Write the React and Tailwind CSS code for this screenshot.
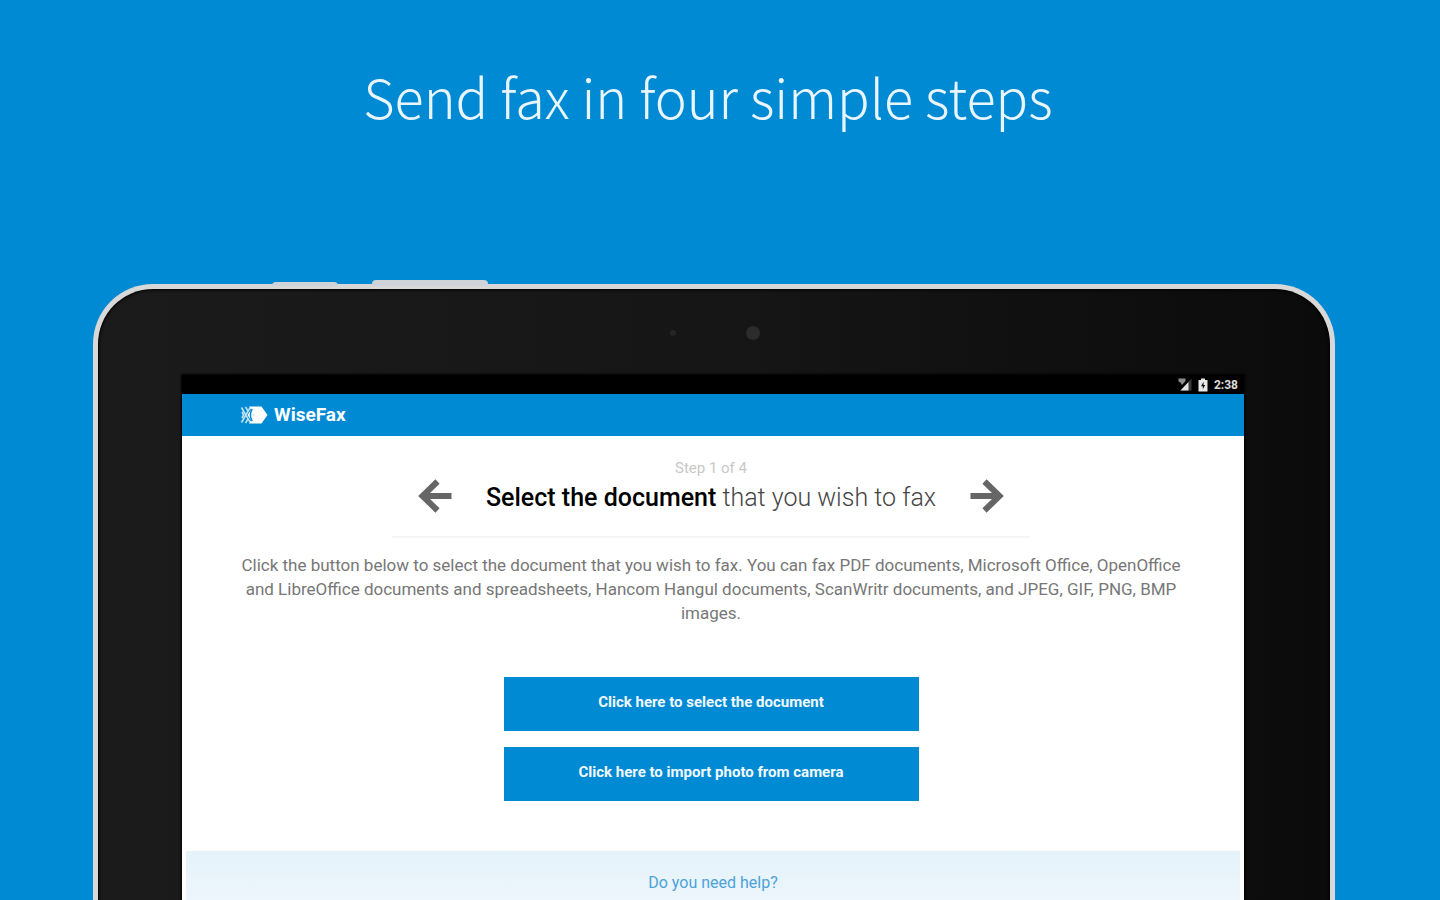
function Logo() {
    return (
        <svg className="h-[18px] w-[28px]" viewBox="0 0 28 18" aria-hidden="true">
            <path d="M9 0.5h12.5L27.5 9l-6 8.5H9L14 9z" fill="#fff" />
            <path d="M10.5 4.5L7.5 9l3 4.5h5L13.5 9l2-4.5z" fill="#fff" />
            <path d="M12.2 2.8Q8.6 9 12.2 15.2" fill="none" stroke="#008ad4" strokeWidth="1.5" />
            <path
                d="M1.5 1.5L10 16.2M1.5 16.5L10 1.8M5.5 0.8L8 5M5.5 17.2L8 13M2 6L3.6 9L2 12"
                fill="none"
                stroke="#fff"
                strokeWidth="1.6"
                strokeOpacity="0.75"
            />
        </svg>
    );
}

function SignalIcon() {
    return (
        <svg className="h-[13px] w-[15px]" viewBox="0 0 15 13" aria-hidden="true">
            <path d="M14.5 0.5v12H3z" fill="#3a3a3a" />
            <path d="M11.5 4v8.5H3.5z" fill="#e4e4e4" />
            <path d="M1.5 0.5h7v2.5l-3.5 4-1.5-2.5L1.5 3.5z" fill="#8d8d8d" />
        </svg>
    );
}

function BatteryIcon() {
    return (
        <svg className="h-[14px] w-[10px]" viewBox="0 0 10 14" aria-hidden="true">
            <path d="M3 0.5h4V2h2.5v11.5h-9V2H3z" fill="#e8e8e8" />
            <path d="M5.6 3.8L3 8.2h1.8v3L7.2 7H5.6z" fill="#111" />
        </svg>
    );
}

function Arrow({ direction }) {
    return (
        <svg
            className={direction === 'left' ? 'h-[34px] w-[34px]' : 'h-[34px] w-[34px] rotate-180'}
            viewBox="0 0 34 34"
            fill="none"
            stroke="#666"
            strokeWidth="6"
            aria-hidden="true"
        >
            <path d="M19.5 2.5L4.5 17l15 14.5M5 17h28.5" />
        </svg>
    );
}

function StatusBar() {
    return (
        <div className="flex h-[19px] items-center justify-end gap-1.5 bg-black pr-1.5">
            <SignalIcon />
            <BatteryIcon />
            <span className="text-xs font-bold text-[#dcdcdc]">2:38</span>
        </div>
    );
}

function StepHeader() {
    return (
        <div className="mx-auto w-2/3 border-b-2 border-[#f5f5f5] pt-6 pb-5 text-center">
            <p className="text-[15px] leading-4 text-[#c8c8c8]">Step 1 of 4</p>
            <div className="flex items-center justify-between px-[26px]">
                <button type="button" aria-label="Previous step">
                    <Arrow direction="left" />
                </button>
                <h2 className="pt-1 text-[25px] leading-9 font-light whitespace-nowrap text-[#444]">
                    <span className="font-medium text-black">Select the document</span> that you wish to fax
                </h2>
                <button type="button" aria-label="Next step">
                    <Arrow direction="right" />
                </button>
            </div>
        </div>
    );
}

function ActionButton({ children }) {
    return (
        <button type="button" className="h-[54px] w-[415px] bg-[#008ad4] pb-1 text-[15px] font-bold text-[#f2f9fe]">
            {children}
        </button>
    );
}

export default function App() {
    return (
        <div className="flex h-screen flex-col overflow-hidden bg-[#008ad4] font-[Roboto,sans-serif]">
            <header className="h-[284px] shrink-0 pt-14 pr-6 text-center">
                <h1 className="font-['Noto_Sans_CJK_SC',sans-serif] text-[54px] leading-[80px] font-light text-[#eaf6ff]">
                    Send fax in four simple steps
                </h1>
            </header>

            {/* Tablet, running off the bottom edge */}
            <div className="relative mr-[105px] -mb-2 ml-[93px] flex flex-1 flex-col rounded-t-[60px] border-5 border-b-0 border-[#d8d8d8] bg-linear-to-r from-[#1b1b1b] via-[#161616] to-[#0b0b0b] pr-[86px] pl-[84px] shadow-[inset_0_0_3px_1px_#000]">
                {/* Side keys */}
                <div className="absolute -top-[7px] left-[174px] h-1 w-[66px] rounded-t-sm bg-[#d0d4d8]" />
                <div className="absolute -top-[9px] left-[274px] h-1.5 w-[116px] rounded-t-sm bg-[#d0d4d8]" />

                {/* Sensor and camera */}
                <div className="flex h-[86px] shrink-0 items-center justify-center gap-[70px] pt-0.5 pl-1">
                    <span className="size-1.5 rounded-full bg-[#252525]" />
                    <span className="size-3.5 rounded-full bg-[#2c2c2c]" />
                </div>

                <main className="flex flex-1 flex-col bg-white shadow-[0_0_2px_1px_#000]">
                    <StatusBar />
                    <div className="flex h-[42px] items-center gap-1.5 bg-[#008ad4] pl-[58px]">
                        <Logo />
                        <span className="text-[19px] font-bold text-white">WiseFax</span>
                    </div>

                    <section className="pr-[54px] pl-[50px]">
                        <StepHeader />
                        <p className="mt-[15px] text-center text-[17px] leading-6 text-[#777]">
                            Click the button below to select the document that you wish to fax. You can fax PDF
                            documents, Microsoft Office, OpenOffice and LibreOffice documents and spreadsheets, Hancom
                            Hangul documents, ScanWritr documents, and JPEG, GIF, PNG, BMP images.
                        </p>
                        <div className="mt-[52px] flex flex-col items-center gap-4">
                            <ActionButton>Click here to select the document</ActionButton>
                            <ActionButton>Click here to import photo from camera</ActionButton>
                        </div>
                    </section>

                    <footer className="mx-1 mt-[50px] flex-1 bg-linear-to-b from-[#e4f2f9] to-[#eef6fd] pt-5 text-center">
                        <a href="#help" className="text-base leading-6 text-[#4ba3d8]">
                            Do you need help?
                        </a>
                    </footer>
                </main>
            </div>
        </div>
    );
}
